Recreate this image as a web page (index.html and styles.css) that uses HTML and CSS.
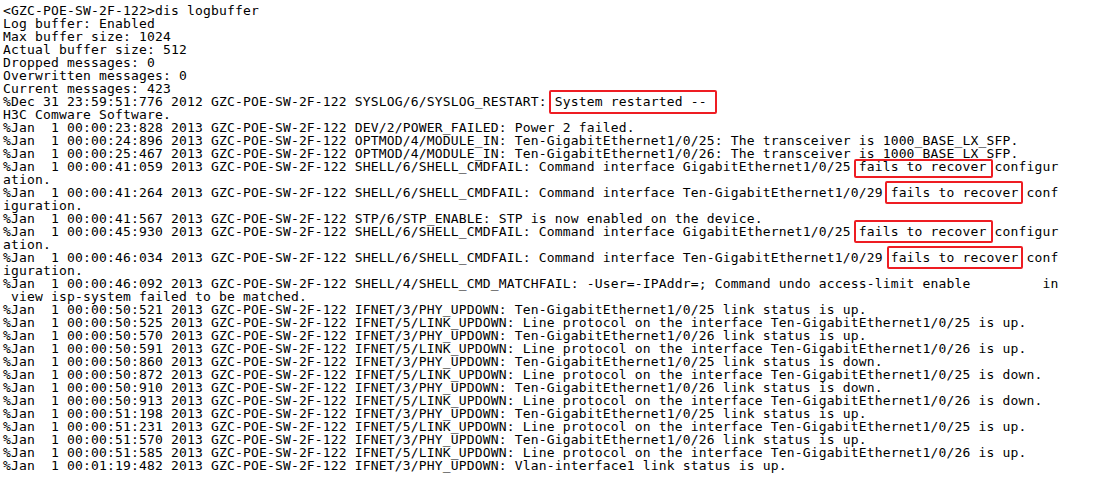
FILE: index.html
```html
<!DOCTYPE html>
<html>
<head>
<meta charset="utf-8">
<link rel="stylesheet" href="styles.css">
</head>
<body>
<div class="screen">
<pre class="log">&lt;GZC-POE-SW-2F-122&gt;dis logbuffer
Log buffer: Enabled
Max buffer size: 1024
Actual buffer size: 512
Dropped messages: 0
Overwritten messages: 0
Current messages: 423
%Dec 31 23:59:51:776 2012 GZC-POE-SW-2F-122 SYSLOG/6/SYSLOG_RESTART: System restarted --
H3C Comware Software.
%Jan  1 00:00:23:828 2013 GZC-POE-SW-2F-122 DEV/2/POWER_FAILED: Power 2 failed.
%Jan  1 00:00:24:896 2013 GZC-POE-SW-2F-122 OPTMOD/4/MODULE_IN: Ten-GigabitEthernet1/0/25: The transceiver is 1000_BASE_LX_SFP.
%Jan  1 00:00:25:467 2013 GZC-POE-SW-2F-122 OPTMOD/4/MODULE_IN: Ten-GigabitEthernet1/0/26: The transceiver is 1000_BASE_LX_SFP.
%Jan  1 00:00:41:059 2013 GZC-POE-SW-2F-122 SHELL/6/SHELL_CMDFAIL: Command interface GigabitEthernet1/0/25 fails to recover configur
ation.
%Jan  1 00:00:41:264 2013 GZC-POE-SW-2F-122 SHELL/6/SHELL_CMDFAIL: Command interface Ten-GigabitEthernet1/0/29 fails to recover conf
iguration.
%Jan  1 00:00:41:567 2013 GZC-POE-SW-2F-122 STP/6/STP_ENABLE: STP is now enabled on the device.
%Jan  1 00:00:45:930 2013 GZC-POE-SW-2F-122 SHELL/6/SHELL_CMDFAIL: Command interface GigabitEthernet1/0/25 fails to recover configur
ation.
%Jan  1 00:00:46:034 2013 GZC-POE-SW-2F-122 SHELL/6/SHELL_CMDFAIL: Command interface Ten-GigabitEthernet1/0/29 fails to recover conf
iguration.
%Jan  1 00:00:46:092 2013 GZC-POE-SW-2F-122 SHELL/4/SHELL_CMD_MATCHFAIL: -User=-IPAddr=; Command undo access-limit enable         in
 view isp-system failed to be matched.
%Jan  1 00:00:50:521 2013 GZC-POE-SW-2F-122 IFNET/3/PHY_UPDOWN: Ten-GigabitEthernet1/0/25 link status is up.
%Jan  1 00:00:50:525 2013 GZC-POE-SW-2F-122 IFNET/5/LINK_UPDOWN: Line protocol on the interface Ten-GigabitEthernet1/0/25 is up.
%Jan  1 00:00:50:570 2013 GZC-POE-SW-2F-122 IFNET/3/PHY_UPDOWN: Ten-GigabitEthernet1/0/26 link status is up.
%Jan  1 00:00:50:591 2013 GZC-POE-SW-2F-122 IFNET/5/LINK_UPDOWN: Line protocol on the interface Ten-GigabitEthernet1/0/26 is up.
%Jan  1 00:00:50:860 2013 GZC-POE-SW-2F-122 IFNET/3/PHY_UPDOWN: Ten-GigabitEthernet1/0/25 link status is down.
%Jan  1 00:00:50:872 2013 GZC-POE-SW-2F-122 IFNET/5/LINK_UPDOWN: Line protocol on the interface Ten-GigabitEthernet1/0/25 is down.
%Jan  1 00:00:50:910 2013 GZC-POE-SW-2F-122 IFNET/3/PHY_UPDOWN: Ten-GigabitEthernet1/0/26 link status is down.
%Jan  1 00:00:50:913 2013 GZC-POE-SW-2F-122 IFNET/5/LINK_UPDOWN: Line protocol on the interface Ten-GigabitEthernet1/0/26 is down.
%Jan  1 00:00:51:198 2013 GZC-POE-SW-2F-122 IFNET/3/PHY_UPDOWN: Ten-GigabitEthernet1/0/25 link status is up.
%Jan  1 00:00:51:231 2013 GZC-POE-SW-2F-122 IFNET/5/LINK_UPDOWN: Line protocol on the interface Ten-GigabitEthernet1/0/25 is up.
%Jan  1 00:00:51:570 2013 GZC-POE-SW-2F-122 IFNET/3/PHY_UPDOWN: Ten-GigabitEthernet1/0/26 link status is up.
%Jan  1 00:00:51:585 2013 GZC-POE-SW-2F-122 IFNET/5/LINK_UPDOWN: Line protocol on the interface Ten-GigabitEthernet1/0/26 is up.
%Jan  1 00:01:19:482 2013 GZC-POE-SW-2F-122 IFNET/3/PHY_UPDOWN: Vlan-interface1 link status is up.</pre>
<div class="mark mark-restart"></div>
<div class="mark mark-a"></div>
<div class="mark mark-b"></div>
<div class="mark mark-c"></div>
<div class="mark mark-d"></div>
</div>
</body>
</html>
```

FILE: styles.css
```css
html, body {
  margin: 0;
  padding: 0;
  background: #ffffff;
}

.screen {
  position: relative;
  width: 1120px;
  height: 483px;
  overflow: hidden;
}

.log {
  margin: 0;
  padding: 4px 0 0 3px;
  font-family: "DejaVu Sans Mono", "Liberation Mono", monospace;
  font-size: 13px;
  letter-spacing: 0.17px;
  line-height: 13px;
  color: #000000;
  white-space: pre;
}

.mark {
  position: absolute;
  box-sizing: border-box;
  border: 2px solid #ee1d23;
  border-radius: 2px;
}

.mark-restart { left: 549px; top: 90px;  width: 168px; height: 24px; }
.mark-a       { left: 854px; top: 159px; width: 139px; height: 19px; }
.mark-b       { left: 885px; top: 181px; width: 138px; height: 23px; }
.mark-c       { left: 854px; top: 220px; width: 139px; height: 23px; }
.mark-d       { left: 887px; top: 246px; width: 136px; height: 23px; }
```
